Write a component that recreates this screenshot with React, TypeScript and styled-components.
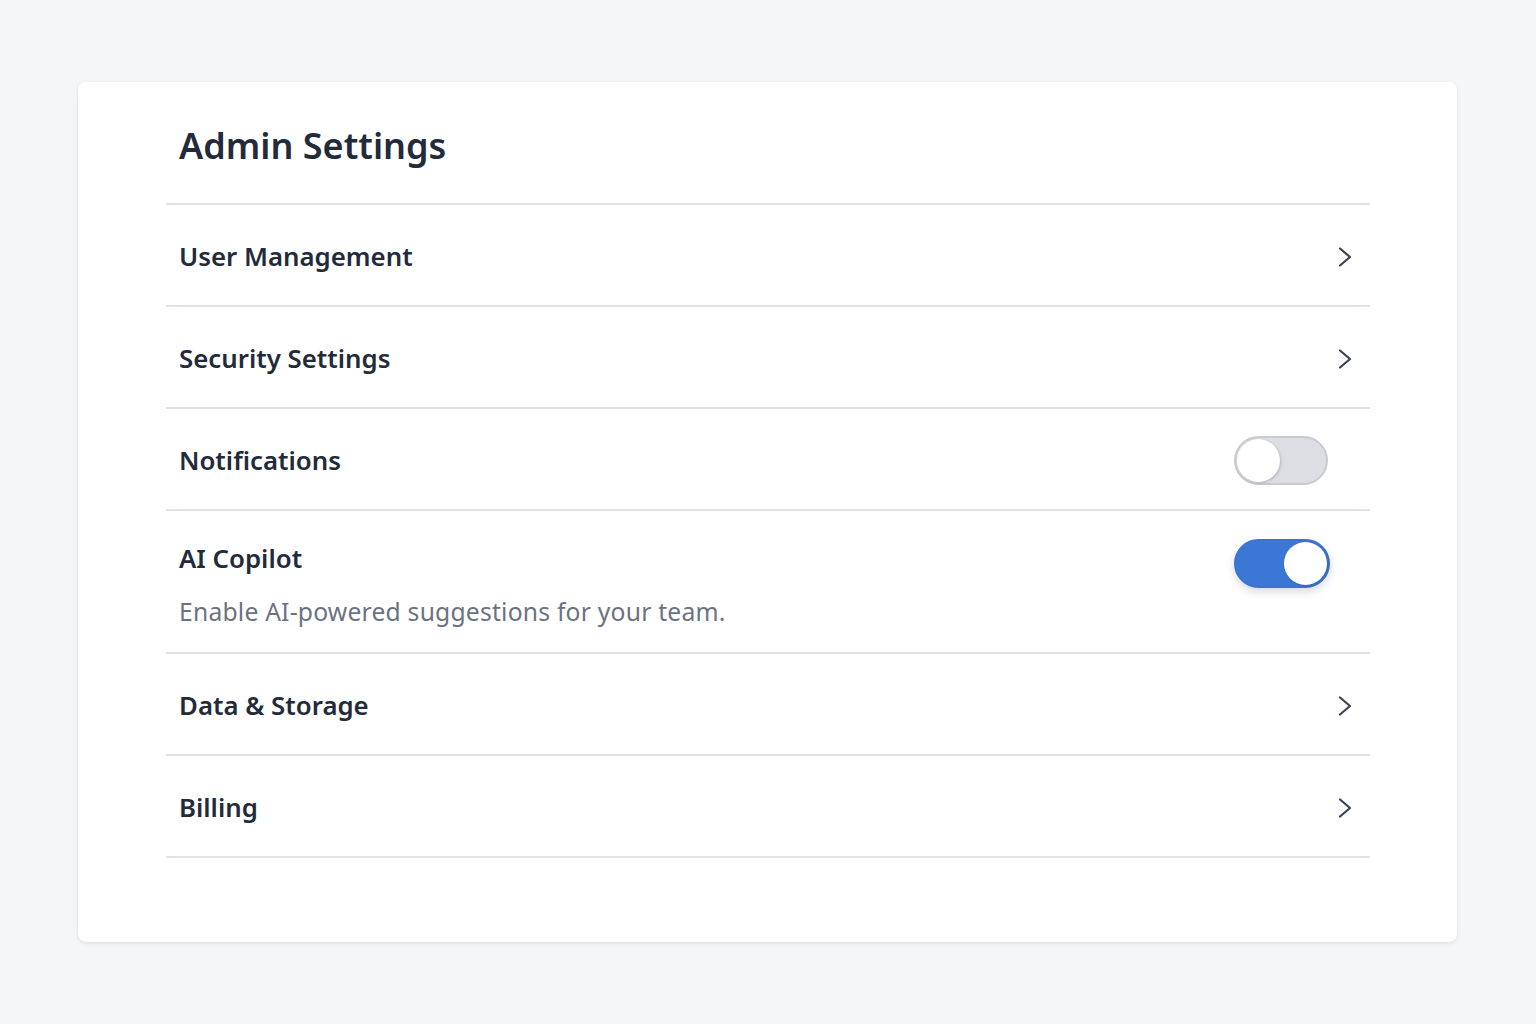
import styled, { createGlobalStyle } from 'styled-components'

const GlobalStyle = createGlobalStyle`
  html, body {
    margin: 0;
    padding: 0;
    background: #f5f6f8;
    font-family: "Noto Sans", "Open Sans", sans-serif;
  }
`

const Page = styled.div`
  width: 1536px;
  height: 1024px;
  box-sizing: border-box;
  padding: 82px 79px 82px 78px;
`

const Card = styled.div`
  height: 860px;
  box-sizing: border-box;
  background: #fff;
  border-radius: 8px;
  box-shadow: 0 1px 3px rgba(20, 30, 50, 0.08), 0 2px 10px rgba(20, 30, 50, 0.04);
  padding: 0 87px 0 88px;
`

const Header = styled.div`
  height: 123px;
  display: flex;
  align-items: center;
  padding: 6px 0 0 13px;
  box-sizing: border-box;
  border-bottom: 2px solid #dfe2e8;
`

const Title = styled.h1`
  margin: 0;
  font-size: 36px;
  font-weight: 600;
  color: #232b3b;
`

const Row = styled.div<{ $tall?: boolean }>`
  height: ${p => (p.$tall ? 143 : 102)}px;
  display: flex;
  align-items: ${p => (p.$tall ? 'flex-start' : 'center')};
  justify-content: space-between;
  padding: ${p => (p.$tall ? '29px 0 0 13px' : '2px 0 0 13px')};
  box-sizing: border-box;
  border-bottom: 2px solid #dfe2e8;
`

const Texts = styled.div`
  display: flex;
  flex-direction: column;
  gap: 19px;
`

const Label = styled.span`
  font-size: 25.8px;
  font-weight: 600;
  color: #232b3b;
`

const Description = styled.span`
  font-size: 24.7px;
  color: #6b7280;
  letter-spacing: 0.2px;
`

const Chevron = styled.svg`
  width: 16px;
  height: 22px;
  margin: 2px 17px 0 0;
  color: #3a4150;
`

const Switch = styled.div<{ $on?: boolean }>`
  width: ${p => (p.$on ? 96 : 94)}px;
  height: 49px;
  box-sizing: border-box;
  border-radius: 25px;
  margin-right: ${p => (p.$on ? 40 : 42)}px;
  margin-top: ${p => (p.$on ? '-1px' : '0')};
  background: ${p => (p.$on ? '#3b78d6' : '#dcdee4')};
  border: 2px solid ${p => (p.$on ? '#3a74d0' : '#c8cbd1')};
  display: flex;
  align-items: center;
  justify-content: ${p => (p.$on ? 'flex-end' : 'flex-start')};
  padding: 0 1px;
  box-shadow: ${p => (p.$on ? '0 4px 8px rgba(40, 60, 110, 0.18)' : 'none')};
`

const Knob = styled.div`
  width: 43px;
  height: 43px;
  border-radius: 50%;
  background: #fff;
  box-shadow: 1px 1px 3px rgba(0, 0, 0, 0.18);
`

function ChevronIcon() {
  return (
    <Chevron viewBox="0 0 16 22" fill="none">
      <path d="M3 2.5 L13 11 L3 19.5" stroke="currentColor" strokeWidth="2.2" strokeLinecap="round" strokeLinejoin="round" />
    </Chevron>
  )
}

export default function App() {
  return (
    <Page>
      <GlobalStyle />
      <Card>
        <Header>
          <Title>Admin Settings</Title>
        </Header>
        <Row>
          <Label>User Management</Label>
          <ChevronIcon />
        </Row>
        <Row>
          <Label>Security Settings</Label>
          <ChevronIcon />
        </Row>
        <Row>
          <Label>Notifications</Label>
          <Switch>
            <Knob />
          </Switch>
        </Row>
        <Row $tall>
          <Texts>
            <Label>AI Copilot</Label>
            <Description>Enable AI-powered suggestions for your team.</Description>
          </Texts>
          <Switch $on>
            <Knob />
          </Switch>
        </Row>
        <Row>
          <Label>Data &amp; Storage</Label>
          <ChevronIcon />
        </Row>
        <Row>
          <Label>Billing</Label>
          <ChevronIcon />
        </Row>
      </Card>
    </Page>
  )
}
